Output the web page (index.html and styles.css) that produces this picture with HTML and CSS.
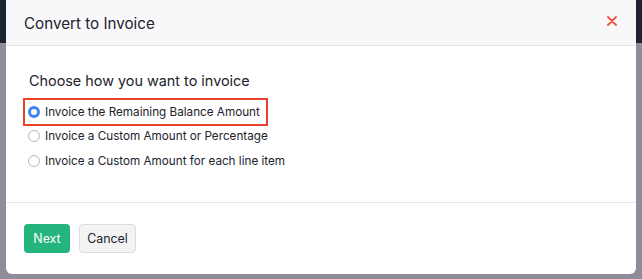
FILE: index.html
```html
<!DOCTYPE html>
<html lang="en">
<head>
  <meta charset="UTF-8">
  <title>Convert to Invoice</title>
  <link rel="stylesheet" href="styles.css">
</head>
<body>

<div class="modal">
  <div class="modal-header">
    <h4>Convert to Invoice</h4>
    <span class="close">
      <svg width="10" height="10" viewBox="0 0 10 10"><path d="M1 1L9 9M9 1L1 9" stroke="#f2553d" stroke-width="1.8" stroke-linecap="round"/></svg>
    </span>
  </div>

  <div class="modal-body">
    <p class="question">Choose how you want to invoice</p>
    <label class="option selected">
      <span class="radio checked"></span>
      Invoice the Remaining Balance Amount
    </label>
    <label class="option">
      <span class="radio"></span>
      Invoice a Custom Amount or Percentage
    </label>
    <label class="option">
      <span class="radio"></span>
      Invoice a Custom Amount for each line item
    </label>
  </div>

  <div class="modal-footer">
    <button class="btn-next">Next</button>
    <button class="btn-cancel">Cancel</button>
  </div>
</div>

</body>
</html>
```

FILE: styles.css
```css
body {
  margin: 0;
  font-family: Inter, 'Noto Sans', sans-serif;
  color: #21232c;
  background: linear-gradient(#1f2230 0, #1f2230 43px, #8e8d99 43px);
  height: 279px;
  overflow: hidden;
}
.modal {
  margin: 0 6px;
  background: white;
  border-radius: 0 0 6px 6px;
  overflow: hidden;
}
.modal-header {
  height: 45px;
  background-color: #f8f8fa;
  border-bottom: 1px solid #e6e6ea;
  display: flex;
  align-items: center;
  justify-content: space-between;
  padding: 0 18px;
}
.modal-header h4 {
  margin: 0;
  font-size: 15.2px;
  font-weight: 400;
  padding-top: 1px;
}
.close {
  display: flex;
  padding: 0 1px 4px 0;
}
.modal-body {
  padding: 24px 17px 0 17px;
  height: 132px;
}
.question {
  margin: 0 0 6px 6px;
  font-size: 14.4px;
  line-height: 22px;
}
.option {
  display: flex;
  align-items: center;
  gap: 5px;
  font-size: 11.7px;
  height: 20px;
  margin-top: 5px;
  padding-left: 5px;
  box-sizing: border-box;
  width: max-content;
}
.option.selected {
  border: 2px solid #e8432a;
  height: 28px;
  margin-top: 0;
  padding: 0 6px 0 3px;
}
.option.selected + .option {
  margin-top: 0;
}
.radio {
  width: 12px;
  height: 12px;
  border: 1px solid #b8b8c0;
  border-radius: 50%;
  box-sizing: border-box;
}
.radio.checked {
  border: 3px solid #3b82f6;
  background: white;
}
.modal-footer {
  border-top: 1px solid #e6e6ea;
  padding: 21px 18px 21px;
  display: flex;
  gap: 9px;
}
button {
  font-family: inherit;
  font-size: 12.4px;
  height: 29px;
  border-radius: 4px;
  padding: 0;
}
.btn-next {
  background-color: #24b47e;
  color: white;
  border: none;
  width: 46px;
}
.btn-cancel {
  background-color: #f3f3f4;
  color: #21232c;
  border: 1px solid #dcdce0;
  width: 57px;
}
```
